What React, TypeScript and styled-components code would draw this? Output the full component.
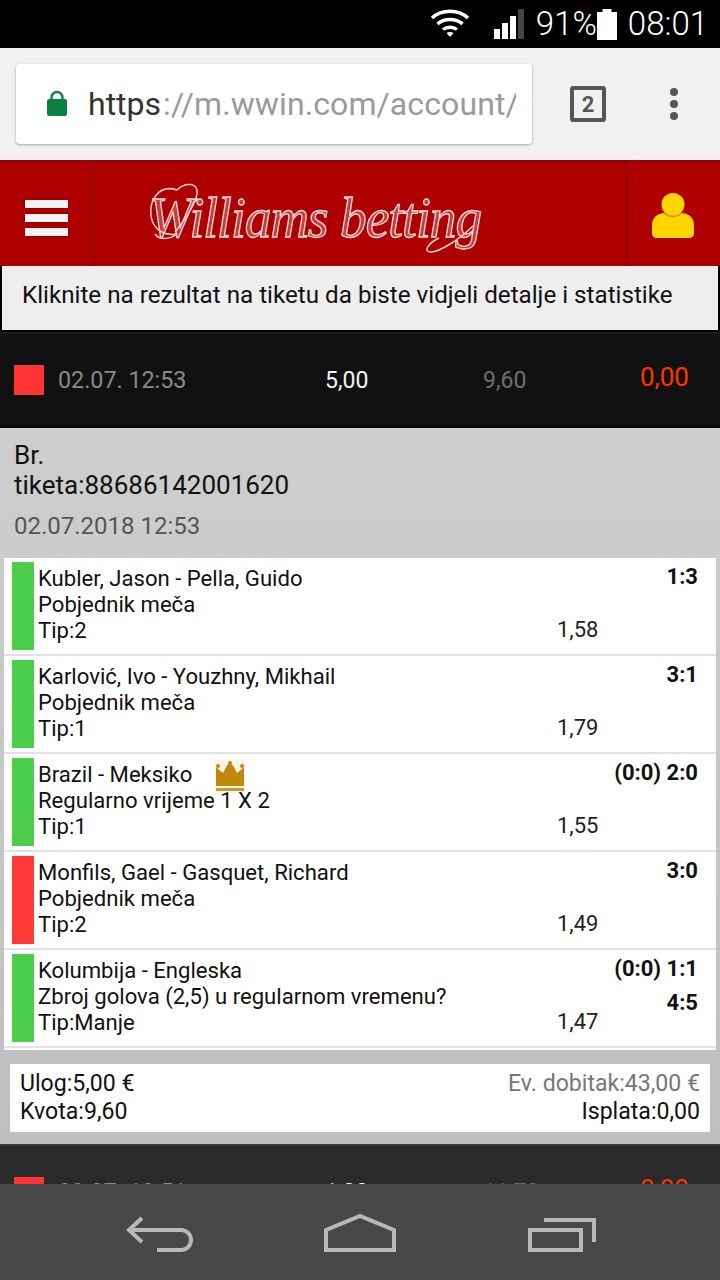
import React from "react";
import styled, { createGlobalStyle } from "styled-components";

const Global = createGlobalStyle`
  html, body { margin: 0; padding: 0; background: #ccc; }
  body { font-family: Roboto, "Liberation Sans", sans-serif; }
  * { box-sizing: border-box; }
`;
const Page = styled.div`
  position: relative; width: 720px; height: 1280px; overflow: hidden; background: #ccc;
`;
const StatusBar = styled.div`
  height: 48px; background: #000; color: #fff; display: flex; align-items: center;
  justify-content: flex-end; padding-right: 12px; font-size: 33px; font-weight: 300;
`;
const StatusText = styled.span<{ $ml?: number }>`
  margin-left: ${p => p.$ml ?? 0}px; line-height: 48px;
`;
const BrowserBar = styled.div`
  height: 112px; background: #f1f1f1; display: flex; align-items: center; padding-left: 16px;
`;
const UrlBox = styled.div`
  width: 516px; height: 80px; background: #fff; border-radius: 4px; box-shadow: 0 1px 3px rgba(0,0,0,.3);
  display: flex; align-items: center; padding-left: 30px; overflow: hidden;
`;
const Url = styled.div`
  margin-left: 20px; width: 428px; overflow: hidden; white-space: nowrap; font-size: 32px; color: #9a9a9a; font-weight: 400;
  letter-spacing: .1px;
  span { color: #333; letter-spacing: 0; margin-right: 2px; }
`;
const TabCount = styled.div`
  margin-left: 38px; width: 36px; height: 36px; border: 4px solid #565656; border-radius: 3px;
  font-size: 22px; font-weight: 700; color: #565656; display: flex; align-items: center; justify-content: center;
`;
const Dots = styled.div`
  margin-left: 64px; display: flex; flex-direction: column; gap: 4px;
  i { display: block; width: 8px; height: 8px; border-radius: 50%; background: #565656; }
`;
const Header = styled.div`
  height: 106px; background: linear-gradient(#8c0000, #ae0000 3px); display: flex;
`;
const MenuCell = styled.div`
  width: 95px; border-right: 2px solid #8f0000; display: flex; flex-direction: column; gap: 6px;
  align-items: center; justify-content: center; padding-top: 10px;
  i { display: block; width: 43px; height: 8px; background: #f2f2f2; box-shadow: 0 0 3px rgba(80,0,0,.7); }
`;
const LogoCell = styled.div`
  flex: 1; display: flex; align-items: center; padding: 9px 0 0 54px; position: relative;
`;
const Logo = styled.div`
  font-family: "Liberation Serif", serif; font-style: italic; font-size: 56px; letter-spacing: -1px;
  color: rgba(255,255,255,.25); -webkit-text-stroke: 1.3px #f6dcdc; white-space: nowrap; line-height: 1;
  transform: scaleX(.95); transform-origin: left; filter: blur(.4px);
`;
const Flourish = styled.svg`
  position: absolute; left: 52px; top: 14px; width: 340px; height: 90px; fill: none; stroke: #f3d0d0; stroke-width: 1.5; filter: blur(.3px);
`;
const UserCell = styled.div`
  width: 94px; border-left: 2px solid #8f0000; display: flex; align-items: center; justify-content: center;
  padding: 5px 2px 0 0;
`;
const Notice = styled.div`
  height: 66px; background: #eee; border-left: 2px solid #000; border-right: 2px solid #000; border-bottom: 2px solid #000;
  display: flex; align-items: center; padding: 0 0 6px 20px; font-size: 24.2px; color: #111;
`;
const TicketRow = styled.div<{ $bg: string; $edge: string }>`
  height: 96px; background: ${p => p.$bg}; display: grid; align-items: center;
  border-top: 2px solid ${p => p.$edge}; border-bottom: 2px solid #050505;
  grid-template-columns: 44px 267px 158px 157px 1fr; padding: 0 0 0 14px;
`;
const Square = styled.div` width: 30px; height: 30px; background: #ff3333; `;
const RowDate = styled.div` color: #8a8a8a; font-size: 23.3px; `;
const RowStake = styled.div` color: #f4f4f4; font-size: 23px; font-weight: 400; `;
const RowOdds = styled.div` color: #6e6e6e; font-size: 23px; `;
const RowPayout = styled.div` color: #ff3300; font-size: 26px; margin-top: -6px; `;
const Detail = styled.div`
  background: linear-gradient(#cecece, #bfbfbf); height: 716px; padding-top: 12px;
`;
const TicketTitle = styled.div`
  padding-left: 14px; font-size: 26px; line-height: 30px; color: #111;
`;
const TicketDate = styled.div`
  padding-left: 14px; margin-top: 11px; font-size: 24px; line-height: 30px; color: #555;
`;
const Matches = styled.div`
  margin: 17px 4px 0; background: #fff; height: 492px;
`;
const Match = styled.div`
  height: 98px; border-bottom: 2px solid #e2e2e2; padding: 4px 18px 0 8px; display: flex; gap: 4px;
`;
const Bar = styled.div<{ $c: string }>`
  width: 22px; height: 88px; background: ${p => p.$c};
`;
const MatchText = styled.div`
  flex: 1; font-size: 22.1px; line-height: 26px; color: #111; padding-top: 3px; position: relative; white-space: nowrap;
`;
const Crown = styled.svg`
  position: absolute; left: 177px; top: 2px; width: 30px; height: 32px;
`;
const OddsCol = styled.div`
  width: 37px; font-size: 22px; padding-top: 55px; color: #222; line-height: 26px;
`;
const ResultCol = styled.div`
  width: 100px; text-align: right; font-size: 22px; font-weight: 700; color: #111; line-height: 26px;
  display: flex; flex-direction: column; gap: 8px; padding-top: 2px; white-space: nowrap;
`;
const Summary = styled.div`
  margin: 14px 10px 0; background: #fff; height: 68px; padding: 6px 10px 0; display: flex; justify-content: space-between;
  font-size: 23.1px; line-height: 28px; color: #111;
`;
const SummaryRight = styled.div` text-align: right; `;
const Muted = styled.div` color: #777; `;
const NavBar = styled.div`
  position: absolute; left: 0; right: 0; bottom: 0; height: 96px; background: #48484a; padding-top: 4px;
  display: grid; grid-template-columns: 240px 240px 240px; align-items: center;
`;
const NavIcon = styled.svg<{ $ml: number }>`
  margin-left: ${p => p.$ml}px; width: 72px; height: 44px; fill: none; stroke: #b8b8b8; stroke-width: 4;
`;

const matches = [
  { n: "Kubler, Jason - Pella, Guido", m: "Pobjednik meča", t: "Tip:2", o: "1,58", r: ["1:3"], c: "#4ccd4c" },
  { n: "Karlović, Ivo - Youzhny, Mikhail", m: "Pobjednik meča", t: "Tip:1", o: "1,79", r: ["3:1"], c: "#4ccd4c" },
  { n: "Brazil - Meksiko", m: "Regularno vrijeme 1 X 2", t: "Tip:1", o: "1,55", r: ["(0:0) 2:0"], c: "#4ccd4c", crown: true },
  { n: "Monfils, Gael - Gasquet, Richard", m: "Pobjednik meča", t: "Tip:2", o: "1,49", r: ["3:0"], c: "#ff3838" },
  { n: "Kolumbija - Engleska", m: "Zbroj golova (2,5) u regularnom vremenu?", t: "Tip:Manje", o: "1,47", r: ["(0:0) 1:1", "4:5"], c: "#4ccd4c" },
];

export default function App() {
  return (
    <Page>
      <Global />
      <StatusBar>
        <svg width="40" height="30" viewBox="0 0 40 30" fill="none" stroke="#fff" strokeWidth="3.4">
          <path d="M2 9 C12 0 28 0 38 9" /><path d="M7.5 15 C14 9 26 9 32.5 15" /><path d="M13 20.5 C17 17.5 23 17.5 27 20.5" />
          <path d="M16.5 24 L20 28 L23.5 24 C21.5 22.5 18.5 22.5 16.5 24Z" fill="#fff" stroke="none" />
        </svg>
        <svg style={{ marginLeft: 24 }} width="31" height="30" viewBox="0 0 31 30">
          <rect x="0" y="20" width="6" height="10" fill="#fff" /><rect x="8" y="14" width="6" height="16" fill="#fff" />
          <rect x="16" y="7" width="6" height="23" fill="#fff" /><rect x="24" y="0" width="6" height="30" fill="#444" />
        </svg>
        <StatusText $ml={11}>91%</StatusText>
        <svg width="20" height="31" viewBox="0 0 20 31"><path d="M5.500 0h9v3H20v28H0V3h5.500z" fill="#fff" /></svg>
        <StatusText $ml={11}>08:01</StatusText>
      </StatusBar>
      <BrowserBar>
        <UrlBox>
          <svg width="22" height="28" viewBox="0 0 22 28">
            <path d="M5.500 11V7.500a5.500 5.500 0 0 1 11 0V11" fill="none" stroke="#0b8043" strokeWidth="2.400" />
            <rect x="1" y="9" width="20" height="17" rx="2.500" fill="#0b8043" />
          </svg>
          <Url><span>https</span>://m.wwin.com/account/</Url>
        </UrlBox>
        <TabCount>2</TabCount>
        <Dots><i /><i /><i /></Dots>
      </BrowserBar>
      <Header>
        <MenuCell><i /><i /><i /></MenuCell>
        <LogoCell>
          <Logo>Williams betting</Logo>
          <Flourish viewBox="0 0 340 90">
            <path d="M30 16 C12 10 2 26 4 42 C6 56 18 62 30 60 C22 66 12 66 8 60" />
            <path d="M30 16 C38 8 52 8 50 20 C48 32 36 48 28 58" />
            <path d="M326 52 C312 66 292 78 284 78 C276 78 280 70 292 64" />
          </Flourish>
        </LogoCell>
        <UserCell>
          <svg width="44" height="46" viewBox="0 0 44 46">
            <path d="M14 20h16c8 0 13 5 13 12v8c0 3-2 5-5 5H6c-3 0-5-2-5-5v-8c0-7 5-12 13-12z" fill="#ffd400" />
            <circle cx="22" cy="11.500" r="11.500" fill="#ffd400" />
            <path d="M13.500 20a12 12 0 0 0 17 0" fill="none" stroke="#cf9000" strokeWidth="1.500" />
          </svg>
        </UserCell>
      </Header>
      <Notice>Kliknite na rezultat na tiketu da biste vidjeli detalje i statistike</Notice>
      <TicketRow $bg="#111" $edge="#1c1c1c">
        <Square /><RowDate>02.07. 12:53</RowDate><RowStake>5,00</RowStake><RowOdds>9,60</RowOdds><RowPayout>0,00</RowPayout>
      </TicketRow>
      <Detail>
        <TicketTitle>Br.<br />tiketa:88686142001620</TicketTitle>
        <TicketDate>02.07.2018 12:53</TicketDate>
        <Matches>
          {matches.map(x => (
            <Match key={x.n}>
              <Bar $c={x.c} />
              <MatchText>
                {x.n}<br />{x.m}<br />{x.t}
                {x.crown && (
                  <Crown viewBox="0 0 30 32">
                    <rect width="30" height="32" fill="#f7f4ea" />
                    <circle cx="3" cy="6" r="2" fill="#bd8a0a" /><circle cx="15" cy="3" r="2" fill="#bd8a0a" /><circle cx="27" cy="6" r="2" fill="#bd8a0a" />
                    <path d="M1 7l7 6 3-6 4-5 4 5 3 6 7-6v19H1z" fill="#bd8a0a" />
                    <rect x="1" y="28" width="28" height="3" fill="#c99a2e" />
                  </Crown>
                )}
              </MatchText>
              <OddsCol>{x.o}</OddsCol>
              <ResultCol>{x.r.map(v => <span key={v}>{v}</span>)}</ResultCol>
            </Match>
          ))}
        </Matches>
        <Summary>
          <div><div>Ulog:5,00 €</div><div>Kvota:9,60</div></div>
          <SummaryRight><Muted>Ev. dobitak:43,00 €</Muted><div>Isplata:0,00</div></SummaryRight>
        </Summary>
      </Detail>
      <TicketRow $bg="#2a2a2a" $edge="#3a3a3a">
        <Square /><RowDate>02.07. 12:51</RowDate><RowStake>1,00</RowStake><RowOdds>11,70</RowOdds><RowPayout>0,00</RowPayout>
      </TicketRow>
      <NavBar>
        <NavIcon $ml={126} viewBox="0 0 72 44">
          <path d="M16 6L3 18l13 12M3 18h52a10 10 0 0 1 0 20H31" />
        </NavIcon>
        <NavIcon $ml={84} viewBox="0 0 72 44">
          <path d="M2 38V18L36 4l34 14v20z" />
        </NavIcon>
        <NavIcon $ml={48} viewBox="0 0 72 44">
          <path d="M2 18h51v20H2zM16 8h50v22" />
        </NavIcon>
      </NavBar>
    </Page>
  );
}
